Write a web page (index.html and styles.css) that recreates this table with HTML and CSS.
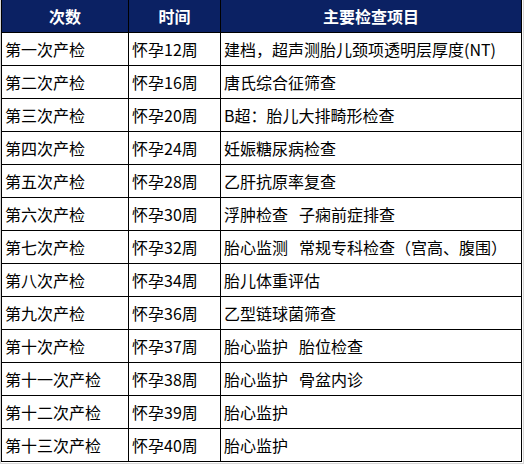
FILE: index.html
```html
<!DOCTYPE html>
<html lang="zh-CN">
<head>
<meta charset="utf-8">
<title>产检时间表</title>
<link rel="stylesheet" href="styles.css">
</head>
<body>
<div class="sheet">
  <div class="grid">
    <div class="cell head">次数</div><div class="cell head">时间</div><div class="cell head">主要检查项目</div>
    <div class="cell">第一次产检</div><div class="cell">怀孕12周</div><div class="cell">建档，超声测胎儿颈项透明层厚度(NT)</div>
    <div class="cell">第二次产检</div><div class="cell">怀孕16周</div><div class="cell">唐氏综合征筛查</div>
    <div class="cell">第三次产检</div><div class="cell">怀孕20周</div><div class="cell">B超：胎儿大排畸形检查</div>
    <div class="cell">第四次产检</div><div class="cell">怀孕24周</div><div class="cell">妊娠糖尿病检查</div>
    <div class="cell">第五次产检</div><div class="cell">怀孕28周</div><div class="cell">乙肝抗原率复查</div>
    <div class="cell">第六次产检</div><div class="cell">怀孕30周</div><div class="cell">浮肿检查<span class="gap"></span>子痫前症排查</div>
    <div class="cell">第七次产检</div><div class="cell">怀孕32周</div><div class="cell">胎心监测<span class="gap"></span>常规专科检查（宫高、腹围）</div>
    <div class="cell">第八次产检</div><div class="cell">怀孕34周</div><div class="cell">胎儿体重评估</div>
    <div class="cell">第九次产检</div><div class="cell">怀孕36周</div><div class="cell">乙型链球菌筛查</div>
    <div class="cell">第十次产检</div><div class="cell">怀孕37周</div><div class="cell">胎心监护<span class="gap"></span>胎位检查</div>
    <div class="cell">第十一次产检</div><div class="cell">怀孕38周</div><div class="cell">胎心监护<span class="gap"></span>骨盆内诊</div>
    <div class="cell">第十二次产检</div><div class="cell">怀孕39周</div><div class="cell">胎心监护</div>
    <div class="cell">第十三次产检</div><div class="cell">怀孕40周</div><div class="cell">胎心监护</div>
  </div>
</div>
</body>
</html>
```
FILE: styles.css
```css
html, body {
  margin: 0;
  padding: 0;
  background: #ffffff;
}
body {
  font-family: "Noto Sans CJK SC", "Noto Sans", sans-serif;
  color: #000000;
}
.sheet {
  display: inline-block;
  border-left: 1px solid #d6d6d6;
  border-right: 1px solid #d6d6d6;
  border-bottom: 1px solid #d6d6d6;
  padding-right: 1px;
  padding-bottom: 1px;
}
.grid {
  display: grid;
  grid-template-columns: 126px 91px 300px;
  grid-template-rows: 32px repeat(13, 32px);
  gap: 1px;
  background: #000000;
  padding: 0 1px 1px 1px;
  width: 521px;
  box-sizing: border-box;
}
.cell {
  background: #ffffff;
  display: flex;
  align-items: center;
  padding: 0 3px;
  font-size: 16px;
  white-space: nowrap;
  overflow: hidden;
  text-spacing-trim: space-all;
}
.gap {
  display: inline-block;
  width: 11px;
  flex: none;
}
.head {
  background: #0b2163;
  color: #ffffff;
  font-weight: 700;
  font-size: 16px;
  justify-content: center;
}
```
